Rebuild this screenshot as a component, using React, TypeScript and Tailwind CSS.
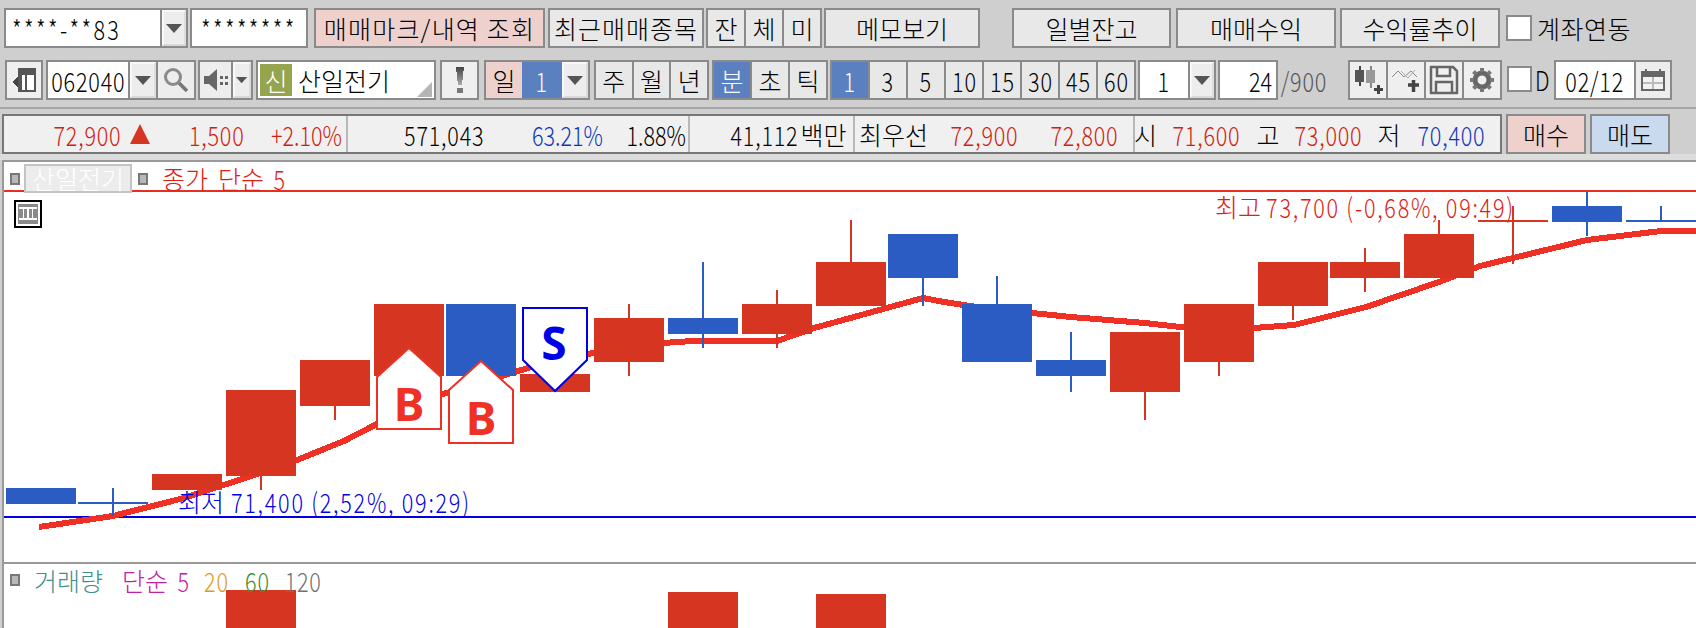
import React from "react";

const Tri = ({ s = 1 }: { s?: number }) => (
  <svg width={16 * s} height={9 * s} viewBox="0 0 16 9"><path d="M0 0H16L8 9Z" fill="#555" /></svg>
);

const Dd = ({ w, s = 1 }: { w: string; s?: number }) => (
  <div className={`${w} shrink-0 flex items-center justify-center bg-[#ededed] border-2 border-[#f8f8f8] border-b-[#d8d8d8] border-r-[#dddddd]`}>
    <Tri s={s} />
  </div>
);

const Btn = ({ c, t, children }: { c: string; t?: string; children: React.ReactNode }) => (
  <div className={`${c} shrink-0 h-full flex items-center justify-center border-2 border-[#8a8a8a] whitespace-nowrap ${t ?? "bg-[#e8e8e8]"}`}>{children}</div>
);

const Cell = ({ c, children }: { c: string; children: React.ReactNode }) => (
  <div className={`${c} h-full flex items-center justify-center whitespace-nowrap`}>{children}</div>
);

const N = ({ children, c = "tracking-[1px]" }: { children: React.ReactNode; c?: string }) => (
  <span className={`inline-block text-[27px] scale-x-[0.8] whitespace-pre ${c}`}>{children}</span>
);

const T = ({ c, children }: { c: string; children: React.ReactNode }) => (
  <div className={`${c} shrink-0 flex items-center justify-center whitespace-nowrap`}>{children}</div>
);

const R = "text-[#d0200f]";
const B = "text-[#0f36b8]";

type C = [number, number, number, number, number, string];
// x, top, bottom, wickTop, wickBottom, colour
const RED = "#d63621";
const BLUE = "#2b5cc4";
const candles: C[] = [
  [6, 488, 504, 488, 504, BLUE],
  [78, 502, 504, 488, 516, BLUE],
  [152, 474, 490, 474, 490, RED],
  [226, 390, 476, 390, 490, RED],
  [300, 360, 406, 360, 420, RED],
  [374, 304, 376, 304, 376, RED],
  [446, 304, 376, 304, 376, BLUE],
  [520, 374, 392, 374, 392, RED],
  [594, 318, 362, 304, 376, RED],
  [668, 318, 334, 262, 348, BLUE],
  [742, 304, 334, 290, 348, RED],
  [816, 262, 306, 220, 306, RED],
  [888, 234, 278, 234, 306, BLUE],
  [962, 304, 362, 276, 362, BLUE],
  [1036, 360, 376, 332, 392, BLUE],
  [1110, 332, 392, 332, 420, RED],
  [1184, 304, 362, 304, 376, RED],
  [1258, 262, 306, 262, 320, RED],
  [1330, 262, 278, 248, 292, RED],
  [1404, 234, 278, 220, 278, RED],
  [1478, 220, 222, 206, 264, RED],
  [1552, 206, 222, 192, 236, BLUE],
  [1626, 220, 222, 206, 222, BLUE],
];
const ma =
  "39,527 113,516 184,498 260,473 297,460 344,441 375,425 440,395 528,368 593,353 640,344 663,343 692,341 777,341 814,328 883,309 923,298 944,302 997,310 1032,313 1071,317 1145,323 1180,327 1254,328 1294,325 1366,307 1439,282 1480,266 1513,258 1587,240 1661,231 1696,231";

const Square = () => <div className="w-[10px] h-[12px] shrink-0 bg-[#b8b8b8] border-2 border-[#777]" />;

export default function App() {
  return (
    <div className="w-[1696px] h-[628px] overflow-hidden bg-[#cfcfcf] font-['Noto_Sans_CJK_KR','Liberation_Sans',sans-serif] text-[25px] font-light text-black leading-none">
      {/* row 1 */}
      <div className="flex items-center h-[40px] pl-[4px] pt-0 mt-[8px]">
        <div className="w-[184px] h-full shrink-0 flex border-2 border-[#8a8a8a] bg-[#8a8a8a] gap-[2px]">
          <div className="w-[154px] bg-white flex items-center pl-[6px]"><N c="origin-left tracking-[3px]">****-**83</N></div>
          <Dd w="w-[24px]" />
        </div>
        <Btn c="ml-[2px] w-[118px]" t="bg-white"><N c="tracking-[3px]">********</N></Btn>
        <Btn c="ml-[6px] w-[231px]" t="bg-[#eed1cd]"><span className="tracking-[1.2px]">매매마크/내역 조회</span></Btn>
        <Btn c="ml-[3px] w-[156px]"><span className="tracking-[1px]">최근매매종목</span></Btn>
        <div className="ml-[2px] w-[116px] h-full shrink-0 flex border-2 border-[#8a8a8a] bg-[#8a8a8a] gap-[2px]">
          <Cell c="flex-1 bg-[#e8e8e8]">잔</Cell><Cell c="flex-1 bg-[#e8e8e8]">체</Cell><Cell c="flex-1 bg-[#e8e8e8]">미</Cell>
        </div>
        <Btn c="ml-[2px] w-[156px]">메모보기</Btn>
        <Btn c="ml-[32px] w-[159px]">일별잔고</Btn>
        <Btn c="ml-[5px] w-[160px]">매매수익</Btn>
        <Btn c="ml-[4px] w-[160px]">수익률추이</Btn>
        <div className="ml-[6px] w-[26px] h-[26px] shrink-0 bg-white border-2 border-[#8a8a8a]" />
        <div className="ml-[5px] whitespace-nowrap tracking-[0.5px]">계좌연동</div>
      </div>

      {/* row 2 */}
      <div className="flex items-center h-[40px] mt-[12px] pl-[5px]">
        <div className="w-[38px] h-full shrink-0 border-2 border-[#8a8a8a] bg-[#efefef] flex items-center justify-center">
          <svg width="24" height="24" viewBox="0 0 24 24" shapeRendering="crispEdges">
            <rect x="6" y="0" width="18" height="24" fill="#555" />
            <rect x="10" y="7" width="3" height="15" fill="#fff" />
            <rect x="15" y="7" width="7" height="15" fill="#fff" />
            <path d="M0 14L6 8V20Z" fill="#444" />
          </svg>
        </div>
        <div className="ml-[3px] w-[150px] h-full shrink-0 flex border-2 border-[#8a8a8a] bg-[#8a8a8a] gap-[2px]">
          <div className="w-[80px] bg-white flex items-center justify-center"><N>062040</N></div>
          <Dd w="w-[26px]" />
          <div className="w-[36px] bg-[#ededed] flex items-center justify-center">
            <svg width="26" height="26" viewBox="0 0 26 26" fill="none" stroke="#8a8a8a">
              <circle cx="10" cy="10" r="7.500" strokeWidth="3" />
              <path d="M16 16L24 24" strokeWidth="3.500" stroke="#777" />
            </svg>
          </div>
        </div>
        <div className="ml-[2px] w-[55px] h-full shrink-0 flex border-2 border-[#8a8a8a] bg-[#8a8a8a] gap-[2px]">
          <div className="w-[31px] bg-[#ededed] flex items-center justify-center">
            <svg width="24" height="24" viewBox="0 0 24 24" fill="#666">
              <path d="M0 8H5L13 1V23L5 16H0Z" />
              <rect x="16" y="8" width="3" height="3" /><rect x="21" y="8" width="3" height="3" />
              <rect x="16" y="14" width="3" height="3" /><rect x="21" y="14" width="3" height="3" />
            </svg>
          </div>
          <Dd w="w-[18px]" s={0.7} />
        </div>
        <div className="ml-[3px] w-[180px] h-full shrink-0 relative flex items-center border-2 border-[#8a8a8a] bg-white pl-[2px]">
          <div className="w-[32px] h-[32px] bg-[#96a44e] text-white flex items-center justify-center">신</div>
          <span className="ml-[6px]">산일전기</span>
          <svg className="absolute right-[2px] bottom-[1px]" width="15" height="15" viewBox="0 0 15 15"><path d="M15 0V15H0Z" fill="#b5b5b5" /></svg>
        </div>
        <div className="ml-[4px] w-[39px] h-full shrink-0 border-2 border-[#8a8a8a] bg-[#efefef] flex items-center justify-center">
          <svg width="8" height="26" viewBox="0 0 8 26" shapeRendering="crispEdges"><defs><linearGradient id="ex" x1="0" y1="0" x2="0" y2="1"><stop offset="0" stopColor="#444" /><stop offset="1" stopColor="#aaa" /></linearGradient></defs><path d="M0 0H8L6 18H2Z" fill="url(#ex)" /><rect x="1" y="21" width="6" height="5" fill="#777" /></svg>
        </div>
        <div className="ml-[5px] w-[106px] h-full shrink-0 flex border-2 border-[#8a8a8a] bg-[#8a8a8a]">
          <Cell c="w-[36px] bg-[#eed1cd]">일</Cell>
          <Cell c="w-[40px] bg-[#5b80bf] text-white"><N>1</N></Cell>
          <Dd w="w-[26px]" />
        </div>
        <div className="ml-[4px] w-[115px] h-full shrink-0 flex border-2 border-[#8a8a8a] bg-[#8a8a8a] gap-[2px]">
          <Cell c="flex-1 bg-[#e8e8e8]">주</Cell><Cell c="flex-1 bg-[#e8e8e8]">월</Cell><Cell c="flex-1 bg-[#e8e8e8]">년</Cell>
        </div>
        <div className="ml-[3px] w-[116px] h-full shrink-0 flex border-2 border-[#8a8a8a] bg-[#8a8a8a] gap-[2px]">
          <Cell c="flex-1 bg-[#5b80bf] text-white">분</Cell><Cell c="flex-1 bg-[#e8e8e8]">초</Cell><Cell c="flex-1 bg-[#e8e8e8]">틱</Cell>
        </div>
        <div className="ml-[2px] w-[306px] h-full shrink-0 flex border-2 border-[#8a8a8a] bg-[#8a8a8a] gap-[2px]">
          <Cell c="flex-1 bg-[#5b80bf] text-white"><N>1</N></Cell>
          {["3", "5", "10", "15", "30", "45", "60"].map((v) => (
            <Cell key={v} c="flex-1 bg-[#e8e8e8]"><N>{v}</N></Cell>
          ))}
        </div>
        <div className="ml-[2px] w-[78px] h-full shrink-0 flex border-2 border-[#8a8a8a] bg-[#8a8a8a] gap-[2px]">
          <Cell c="w-[48px] bg-white"><N>1</N></Cell>
          <Dd w="w-[24px]" />
        </div>
        <Btn c="ml-[2px] w-[60px]" t="bg-white"><N c="relative left-[12px]">24</N></Btn>
        <div className="ml-[2px] w-[47px] shrink-0 flex justify-center text-[#555] whitespace-nowrap"><N>/900</N></div>
        <div className="ml-[21px] w-[154px] h-full shrink-0 flex border-2 border-[#8a8a8a] bg-[#8a8a8a] gap-[2px]">
          <Cell c="flex-1 bg-[#efefef]">
            <svg width="30" height="30" viewBox="0 0 30 30" shapeRendering="crispEdges">
              <rect x="6" y="1" width="2" height="20" fill="#444" /><rect x="2" y="5" width="9" height="12" fill="#555" />
              <rect x="17" y="1" width="2" height="22" fill="#888" /><rect x="13" y="5" width="9" height="13" fill="#999" />
              <rect x="21" y="23" width="9" height="3" fill="#444" /><rect x="24" y="20" width="3" height="9" fill="#444" />
            </svg>
          </Cell>
          <Cell c="flex-1 bg-[#efefef]">
            <svg width="30" height="30" viewBox="0 0 30 30">
              <path d="M1 12L7 6L13 12L20 6L26 12" fill="none" stroke="#888" strokeWidth="1" />
              <path d="M10 6L17 13L24 5" fill="none" stroke="#aaa" strokeWidth="1" />
              <path d="M17 20H28M22.500 15V27" stroke="#444" strokeWidth="3.500" fill="none" />
            </svg>
          </Cell>
          <Cell c="flex-1 bg-[#efefef]">
            <svg width="30" height="30" viewBox="0 0 30 30" fill="none" stroke="#666" strokeWidth="2.500">
              <path d="M2 2H24L28 6V28H2Z" />
              <path d="M8 2V11H21V2" /><path d="M7 28V17H23V28" />
            </svg>
          </Cell>
          <Cell c="flex-1 bg-[#efefef]">
            <svg width="26" height="26" viewBox="0 0 26 26">
              <circle cx="13" cy="13" r="7" fill="none" stroke="#666" strokeWidth="5" />
              <path d="M13 1V25M1 13H25M4.500 4.500L21.500 21.500M21.500 4.500L4.500 21.500" stroke="#777" strokeWidth="4" strokeDasharray="4 16" />
            </svg>
          </Cell>
        </div>
        <div className="ml-[5px] w-[25px] h-[26px] self-start mt-[6px] shrink-0 bg-white border-2 border-[#8a8a8a]" />
        <div className="ml-[6px] w-[10px] shrink-0 flex justify-center self-start mt-[6px]"><N>D</N></div>
        <div className="ml-[6px] w-[118px] h-full shrink-0 flex border-2 border-[#8a8a8a] bg-[#8a8a8a] gap-[2px]">
          <Cell c="w-[78px] bg-white"><N>02/12</N></Cell>
          <Cell c="w-[34px] bg-[#ededed]">
            <svg width="24" height="22" viewBox="0 0 24 22" shapeRendering="crispEdges">
              <rect x="0" y="2" width="24" height="20" fill="#666" />
              <rect x="2" y="8" width="20" height="12" fill="#f2f2f2" />
              <path d="M12 8V20M2 14H22" stroke="#bbb" strokeWidth="2" />
              <rect x="4" y="0" width="2" height="3" fill="#666" /><rect x="18" y="0" width="2" height="3" fill="#666" />
            </svg>
          </Cell>
        </div>
      </div>

      {/* divider */}
      <div className="h-[2px] mt-[7px] bg-[#a8a8a8]" />

      {/* row 3 */}
      <div className="flex h-[40px] mt-[5px] pl-[2px]">
        <div className="w-[1500px] h-full shrink-0 flex border-2 border-[#777] bg-[#f0f0f0]">
          <div className="w-[344px] flex items-center border-r-2 border-[#b8b8b8]">
            <T c={`ml-[48px] w-[70px] ${R}`}><N>72,900</N></T>
            <T c="ml-[8px] w-[20px]"><svg width="20" height="20" viewBox="0 0 20 20"><path d="M10 0L20 20H0Z" fill="#d63621" /></svg></T>
            <T c={`ml-[38px] w-[58px] ${R}`}><N>1,500</N></T>
            <T c={`ml-[25px] w-[71px] ${R}`}><N c="tracking-[0px]">+2.10%</N></T>
          </div>
          <div className="w-[342px] flex items-center border-r-2 border-[#b8b8b8]">
            <T c="ml-[55px] w-[83px]"><N>571,043</N></T>
            <T c={`ml-[45px] w-[72px] ${B}`}><N c="tracking-[0px]">63.21%</N></T>
            <T c="ml-[24px] w-[58px]"><N c="tracking-[0px]">1.88%</N></T>
          </div>
          <div className="w-[165px] flex items-center border-r-2 border-[#b8b8b8]">
            <T c="ml-[40px] w-[69px]"><N>41,112</N></T>
            <T c="w-[49px]">백만</T>
          </div>
          <div className="w-[280px] flex items-center border-r-2 border-[#b8b8b8]">
            <T c="ml-[4px] w-[69px]">최우선</T>
            <T c={`ml-[21px] w-[71px] ${R}`}><N>72,900</N></T>
            <T c={`ml-[29px] w-[71px] ${R}`}><N>72,800</N></T>
          </div>
          <div className="flex-1 flex items-center">
            <T c="ml-[1px] w-[19px]">시</T>
            <T c={`ml-[16px] w-[71px] ${R}`}><N>71,600</N></T>
            <T c="ml-[16px] w-[20px]">고</T>
            <T c={`ml-[15px] w-[71px] ${R}`}><N>73,000</N></T>
            <T c="ml-[15px] w-[20px]">저</T>
            <T c={`ml-[17px] w-[71px] ${B}`}><N>70,400</N></T>
          </div>
        </div>
        <Btn c="ml-[4px] w-[80px]" t="bg-[#eed1cd]">매수</Btn>
        <Btn c="ml-[4px] w-[80px]" t="bg-[#c9daee]">매도</Btn>
      </div>

      {/* chart */}
      <div className="h-[6px] bg-[#dcdcdc]" />
      <div className="ml-[2px] h-[468px] bg-white border-l-2 border-t-2 border-[#999] flex flex-col">
        <div className="relative h-[400px]">
          <svg className="absolute inset-0" width="1692" height="400" viewBox="4 162 1692 400">
            <rect x="4" y="190" width="1692" height="2" fill="#e92d20" shapeRendering="crispEdges" />
            <rect x="4" y="516" width="1692" height="2" fill="#0000e6" shapeRendering="crispEdges" />
            <polyline points={ma} fill="none" stroke="#ee3124" strokeWidth="6" shapeRendering="crispEdges" />
            <g shapeRendering="crispEdges">
              {candles.map(([x, t, b, wt, wb, col], i) => (
                <g key={i}>
                  <rect x={x} y={t} width="70" height={b - t} fill={col} />
                  <rect x={x + 34} y={wt} width="2" height={wb - wt} fill={col} />
                </g>
              ))}
            </g>
            <path d="M409 348L441 377V429H377V377Z" fill="#fff" stroke="#ee3124" strokeWidth="2" />
            <path d="M481 361L513 390V443H449V390Z" fill="#fff" stroke="#ee3124" strokeWidth="2" />
            <path d="M523 308H587V360L555 391L523 360Z" fill="#fff" stroke="#0000e6" strokeWidth="2" />
            <text x="409" y="421" textAnchor="middle" fontFamily="'Noto Sans'" fontWeight="700" fontSize="46" fill="#ee3124">B</text>
            <text x="481" y="435" textAnchor="middle" fontFamily="'Noto Sans'" fontWeight="700" fontSize="46" fill="#ee3124">B</text>
            <text x="554" y="360" textAnchor="middle" fontFamily="'Noto Sans'" fontWeight="700" fontSize="46" fill="#0000e6">S</text>
          </svg>
          {/* legend */}
          <div className="absolute left-[6px] top-[2px] h-[29px] flex items-center text-[#e0200f]">
            <Square />
            <div className="ml-[4px] w-[108px] h-[29px] flex items-center justify-center border-2 border-[#c4c4c4] bg-[#ececec] text-white">산일전기</div>
            <div className="ml-[6px]"><Square /></div>
            <T c="ml-[14px] w-[46px]">종가</T>
            <T c="ml-[10px] w-[46px]">단순</T>
            <T c="ml-[10px] w-[11px]"><N>5</N></T>
          </div>
          <div className="absolute left-[10px] top-[38px] w-[28px] h-[28px] border-2 border-black flex items-center justify-center bg-white">
            <svg width="20" height="20" viewBox="0 0 20 20" shapeRendering="crispEdges">
              <rect width="20" height="20" fill="#8a8a8a" />
              <path d="M1 4H19M1 15H19" stroke="#fff" strokeWidth="1.500" />
              <path d="M5.500 5V14M10 5V14M14.500 5V14" stroke="#fff" strokeWidth="1.500" />
            </svg>
          </div>
          <div className="absolute left-[1210px] top-[33px] h-[22px] flex items-center text-[#e0200f]">
            <T c="w-[48px]">최고</T>
            <T c="ml-[7px] w-[243px]"><N c="tracking-[2.200px]">73,700 (-0,68%, 09:49)</N></T>
          </div>
          <div className="absolute left-[176px] top-[328px] h-[22px] flex items-center text-[#0000e6]">
            <T c="w-[42px]">최저</T>
            <T c="ml-[15px] w-[228px]"><N c="tracking-[2.200px]">71,400 (2,52%, 09:29)</N></T>
          </div>
        </div>
        <div className="relative h-[66px] border-t-2 border-[#999]">
          <svg className="absolute inset-0" width="1692" height="64" viewBox="4 564 1692 64" shapeRendering="crispEdges">
            <rect x="226" y="590" width="70" height="38" fill={RED} />
            <rect x="668" y="592" width="70" height="36" fill={RED} />
            <rect x="816" y="594" width="70" height="34" fill={RED} />
          </svg>
          <div className="absolute left-[6px] top-[6px] h-[20px] flex items-center">
            <Square />
            <T c="ml-[14px] w-[69px] text-[#3f8f8f]">거래량</T>
            <T c="ml-[19px] w-[46px] text-[#c4209f]">단순</T>
            <T c="ml-[10px] w-[12px] text-[#c4209f]"><N>5</N></T>
            <T c="ml-[15px] w-[23px] text-[#e09a20]"><N>20</N></T>
            <T c="ml-[18px] w-[22px] text-[#3a9030]"><N>60</N></T>
            <T c="ml-[19px] w-[33px] text-[#707070]"><N>120</N></T>
          </div>
        </div>
      </div>
    </div>
  );
}
